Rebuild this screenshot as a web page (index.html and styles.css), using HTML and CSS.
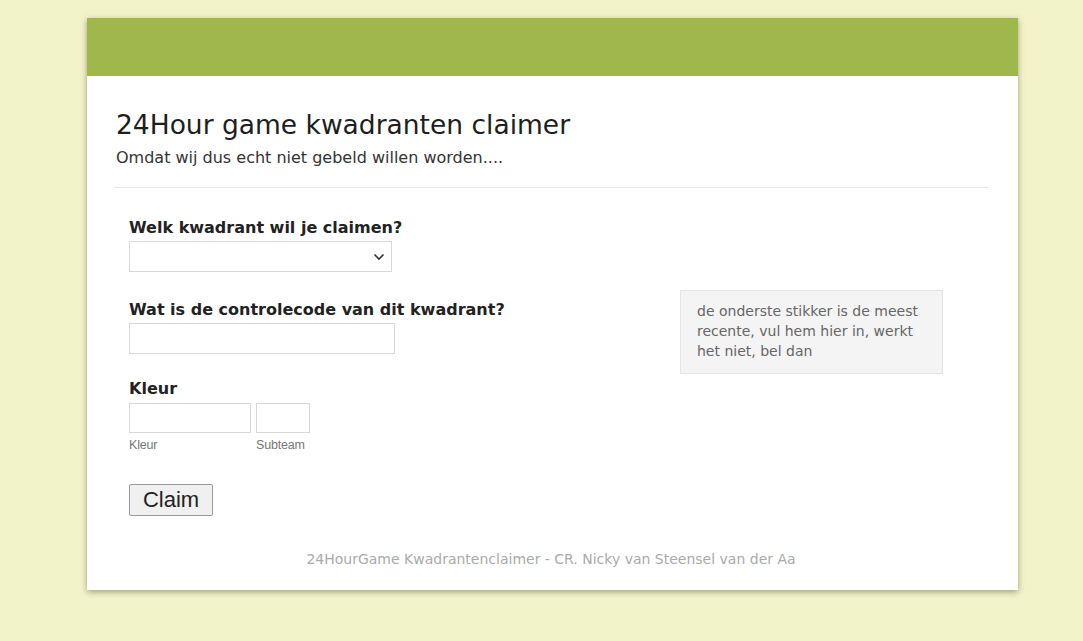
FILE: index.html
```html
<!DOCTYPE html>
<html>
<head>
<meta charset="utf-8">
<link rel="stylesheet" href="styles.css">
</head>
<body>
<div class="card">
  <div class="topbar"></div>
  <div class="content">
    <div class="header">
      <h1 class="title">24Hour game kwadranten claimer</h1>
      <div class="subtitle">Omdat wij dus echt niet gebeld willen worden....</div>
    </div>
    <div class="form">
      <div class="fields">
        <div class="field f1">
          <div class="label">Welk kwadrant wil je claimen?</div>
          <div class="select">
            <svg class="chev" width="12" height="8" viewBox="0 0 12 8"><path d="M1.5 1.5 L6 6 L10.5 1.5" fill="none" stroke="#333" stroke-width="1.6"/></svg>
          </div>
        </div>
        <div class="field f2">
          <div class="label">Wat is de controlecode van dit kwadrant?</div>
          <div class="input wide"></div>
        </div>
        <div class="field f3">
          <div class="label">Kleur</div>
          <div class="pair">
            <div class="sub">
              <div class="input color"></div>
              <div class="sublabel">Kleur</div>
            </div>
            <div class="sub">
              <div class="input team"></div>
              <div class="sublabel">Subteam</div>
            </div>
          </div>
        </div>
        <button class="btn">Claim</button>
      </div>
      <div class="help">de onderste stikker is de meest recente, vul hem hier in, werkt het niet, bel dan</div>
    </div>
    <div class="footer">24HourGame Kwadrantenclaimer - CR. Nicky van Steensel van der Aa</div>
  </div>
</div>
</body>
</html>
```
FILE: styles.css
```css
html, body {
  margin: 0;
  padding: 0;
  background: #f3f3ca;
  height: 100%;
}
body {
  font-family: "DejaVu Sans", Verdana, sans-serif;
  color: #222;
  overflow: hidden;
}
.card {
  margin: 18px 0 0 87px;
  width: 931px;
  height: 572px;
  background: #fff;
  box-shadow: 0 2px 6px rgba(60, 60, 20, 0.45);
  display: flex;
  flex-direction: column;
}
.topbar {
  height: 58px;
  background: #a0b84b;
}
.content {
  padding: 0 30px 0 27px;
  display: flex;
  flex-direction: column;
}
.header {
  padding: 33px 0 19px 2px;
  border-bottom: 1px solid #e6e6e6;
}
.title {
  margin: 0;
  font-weight: normal;
  font-size: 26.5px;
  line-height: 32px;
  color: #1e1e1e;
}
.subtitle {
  font-size: 16px;
  line-height: 20px;
  color: #333;
  margin-top: 7px;
}
.form {
  display: flex;
  padding: 29px 0 0 15px;
}
.fields {
  width: 551px;
  display: flex;
  flex-direction: column;
}
.f1 { margin-bottom: 27px; }
.f2 { margin-bottom: 24px; }
.f3 { margin-bottom: 0; }
.label {
  font-weight: bold;
  font-size: 16px;
  line-height: 22px;
  color: #222;
}
.select {
  width: 263px;
  height: 31px;
  border: 1px solid #d8d8d8;
  box-sizing: border-box;
  margin-top: 2px;
  display: flex;
  align-items: center;
  justify-content: flex-end;
  padding-right: 6px;
}
.input {
  height: 31px;
  border: 1px solid #d8d8d8;
  box-sizing: border-box;
  margin-top: 2px;
}
.wide { width: 266px; }
.pair {
  display: flex;
  gap: 5px;
  margin-top: 1px;
}
.pair .input { height: 30px; }
.color { width: 122px; }
.team { width: 54px; }
.sublabel {
  font-family: "Liberation Sans", Arial, sans-serif;
  font-size: 12.5px;
  line-height: 18px;
  padding-top: 3px;
  color: #777;
  letter-spacing: -0.2px;
}
.btn {
  align-self: flex-start;
  margin-top: 30px;
  width: 84px;
  height: 32px;
  font-family: "Liberation Sans", Arial, sans-serif;
  font-size: 22px;
  color: #222;
  background: #f0f0f0;
  border: 1px solid #999;
  border-radius: 2px;
  padding: 0;
}
.help {
  margin-top: 73px;
  width: 263px;
  height: 84px;
  box-sizing: border-box;
  background: #f4f4f4;
  border: 1px solid #e4e4e4;
  padding: 10px 16px;
  font-size: 14px;
  line-height: 20px;
  color: #666;
  align-self: flex-start;
}
.footer {
  margin-top: 35px;
  text-align: center;
  font-size: 14px;
  color: #aaa;
}
```
